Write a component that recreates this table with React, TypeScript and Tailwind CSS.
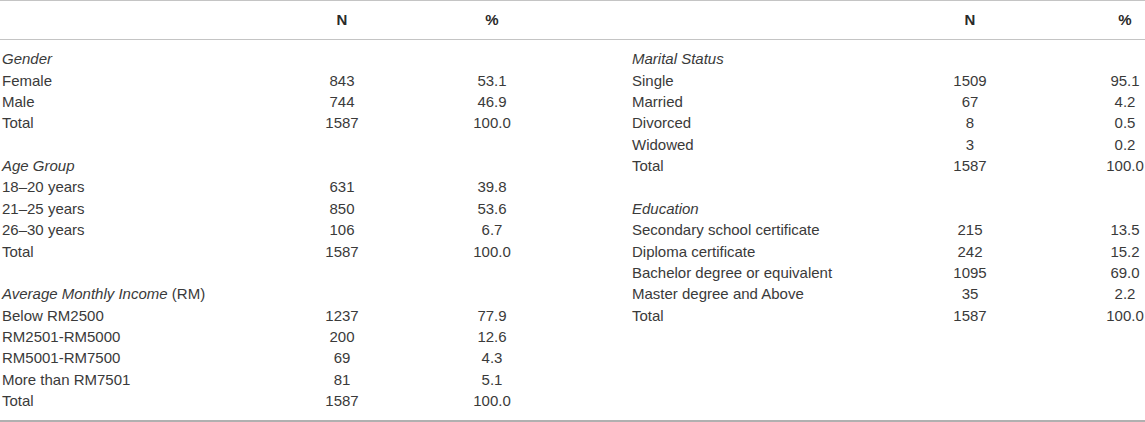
type Row = { label: string; n?: string; pct?: string; head?: boolean; suffix?: string };

const left: Row[] = [
  { label: 'Gender', head: true },
  { label: 'Female', n: '843', pct: '53.1' },
  { label: 'Male', n: '744', pct: '46.9' },
  { label: 'Total', n: '1587', pct: '100.0' },
  { label: '' },
  { label: 'Age Group', head: true },
  { label: '18–20 years', n: '631', pct: '39.8' },
  { label: '21–25 years', n: '850', pct: '53.6' },
  { label: '26–30 years', n: '106', pct: '6.7' },
  { label: 'Total', n: '1587', pct: '100.0' },
  { label: '' },
  { label: 'Average Monthly Income', head: true, suffix: ' (RM)' },
  { label: 'Below RM2500', n: '1237', pct: '77.9' },
  { label: 'RM2501-RM5000', n: '200', pct: '12.6' },
  { label: 'RM5001-RM7500', n: '69', pct: '4.3' },
  { label: 'More than RM7501', n: '81', pct: '5.1' },
  { label: 'Total', n: '1587', pct: '100.0' },
];

const right: Row[] = [
  { label: 'Marital Status', head: true },
  { label: 'Single', n: '1509', pct: '95.1' },
  { label: 'Married', n: '67', pct: '4.2' },
  { label: 'Divorced', n: '8', pct: '0.5' },
  { label: 'Widowed', n: '3', pct: '0.2' },
  { label: 'Total', n: '1587', pct: '100.0' },
  { label: '' },
  { label: 'Education', head: true },
  { label: 'Secondary school certificate', n: '215', pct: '13.5' },
  { label: 'Diploma certificate', n: '242', pct: '15.2' },
  { label: 'Bachelor degree or equivalent', n: '1095', pct: '69.0' },
  { label: 'Master degree and Above', n: '35', pct: '2.2' },
  { label: 'Total', n: '1587', pct: '100.0' },
];

function Label({ row }: { row: Row }) {
  if (!row.label) return <>&nbsp;</>;
  if (row.head)
    return (
      <>
        <span className="italic">{row.label}</span>
        {row.suffix}
      </>
    );
  return <>{row.label}</>;
}

function LeftRow({ row }: { row: Row }) {
  return (
    <div className="flex h-[21.35px] items-center">
      <div className="w-[270px] pl-[2px] whitespace-nowrap">
        <Label row={row} />
      </div>
      <div className="w-[144px] text-center">{row.n}</div>
      <div className="w-[156px] text-center">{row.pct}</div>
    </div>
  );
}

function RightRow({ row }: { row: Row }) {
  return (
    <div className="flex h-[21.35px] items-center">
      <div className="w-[288px] whitespace-nowrap">
        <Label row={row} />
      </div>
      <div className="w-[100px] text-center">{row.n}</div>
      <div className="w-[125px] pl-[85px] text-center">{row.pct}</div>
    </div>
  );
}

export default function App() {
  return (
    <div
      className="w-[1145px] h-[422px] bg-white text-[#3a3a3a] text-[15px] overflow-hidden"
      style={{ fontFamily: '"Liberation Sans", Arial, sans-serif' }}
    >
      <div className="flex h-[40px] items-center border-t border-b border-[#c4c4c4] font-bold text-[#2a2a2a]">
        <div className="flex w-[572px]">
          <div className="w-[270px]" />
          <div className="w-[144px] text-center">N</div>
          <div className="w-[156px] text-center">%</div>
        </div>
        <div className="flex pl-[60px]">
          <div className="w-[288px]" />
          <div className="w-[100px] text-center">N</div>
          <div className="w-[125px] pl-[85px] text-center">%</div>
        </div>
      </div>
      <div className="flex pt-[9px] pb-[8px] border-b-2 border-[#b0b0b0]">
        <div className="w-[572px]">
          {left.map((r, i) => (
            <LeftRow key={i} row={r} />
          ))}
        </div>
        <div className="pl-[60px]">
          {right.map((r, i) => (
            <RightRow key={i} row={r} />
          ))}
        </div>
      </div>
    </div>
  );
}
